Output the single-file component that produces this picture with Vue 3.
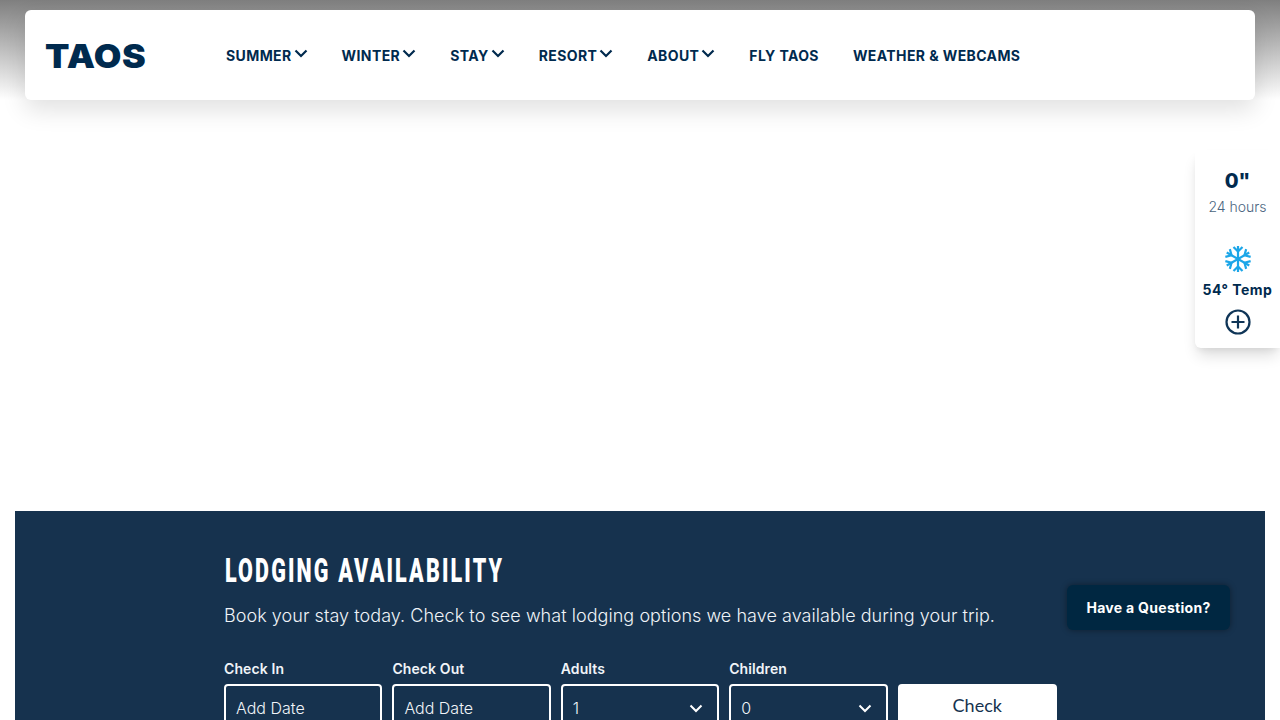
<template>
  <div class="page">
    <header class="site-header">
      <a class="logo">TAOS</a>
      <nav class="main-nav">
        <a v-for="item in navItems" :key="item.label" class="nav-link">
          {{ item.label }}
          <svg v-if="item.menu" class="nav-chevron" viewBox="0 0 14 9">
            <path d="M1.5 1.5 7 7l5.5-5.5" />
          </svg>
        </a>
      </nav>
    </header>

    <div class="hero"></div>

    <section class="lodging">
      <h2 class="lodging-title">Lodging Availability</h2>
      <p class="lodging-text">Book your stay today. Check to see what lodging options we have available during your trip.</p>
      <form class="lodging-form">
        <div v-for="field in fields" :key="field.label" class="field">
          <label class="field-label">{{ field.label }}</label>
          <div class="field-input">
            <span>{{ field.value }}</span>
            <svg v-if="field.select" class="select-chevron" viewBox="0 0 14 9">
              <path d="M1.5 1.5 7 7l5.5-5.5" />
            </svg>
          </div>
        </div>
        <button type="button" class="check-btn">Check</button>
      </form>
    </section>

    <aside class="conditions">
      <div class="snow-depth">0"</div>
      <div class="snow-period">24 hours</div>
      <svg class="snow-icon" viewBox="0 0 28 28">
        <g v-for="angle in [0, 60, 120]" :key="angle" :transform="`rotate(${angle} 14 14)`">
          <path d="M14 1v26" />
          <path d="M9.5 2 14 6.5 18.5 2M9.5 26 14 21.5l4.500 4.500" />
        </g>
      </svg>
      <div class="temp">54° Temp</div>
      <svg class="plus-icon" viewBox="0 0 26 26">
        <circle cx="13" cy="13" r="11.5" />
        <path d="M13 6.500v13M6.500 13h13" />
      </svg>
    </aside>

    <button type="button" class="question-btn">Have a Question?</button>
  </div>
</template>

<script setup>
const navItems = [
  { label: 'SUMMER', menu: true },
  { label: 'WINTER', menu: true },
  { label: 'STAY', menu: true },
  { label: 'RESORT', menu: true },
  { label: 'ABOUT', menu: true },
  { label: 'FLY TAOS', menu: false },
  { label: 'WEATHER & WEBCAMS', menu: false }
]

const fields = [
  { label: 'Check In', value: 'Add Date', select: false },
  { label: 'Check Out', value: 'Add Date', select: false },
  { label: 'Adults', value: '1', select: true },
  { label: 'Children', value: '0', select: true }
]
</script>

<style>
html,
body {
  margin: 0;
  background: #fff;
}
</style>

<style scoped>
.page {
  position: relative;
  width: 1280px;
  height: 720px;
  overflow: hidden;
  padding-top: 10px;
  box-sizing: border-box;
  background: linear-gradient(#7f7f7f, #fff 100px) no-repeat;
  background-size: 100% 100px;
  font-family: Inter, "Liberation Sans", sans-serif;
}

.site-header {
  display: flex;
  align-items: center;
  height: 90px;
  margin: 0 25px;
  padding-left: 20px;
  background: #fff;
  border-radius: 6px;
  box-shadow: 0 10px 25px rgba(0, 0, 0, 0.12);
}

.logo {
  width: 100px;
  margin-top: 2px;
  font-size: 33px;
  font-weight: 900;
  line-height: 1;
  letter-spacing: 0.5px;
  color: #002a4e;
  transform: scaleX(1.08);
  transform-origin: left center;
}

.main-nav {
  display: flex;
  gap: 34px;
  margin-left: 81px;
}

.nav-link {
  display: flex;
  align-items: center;
  gap: 2px;
  font-size: 14px;
  font-weight: 700;
  letter-spacing: 0.4px;
  color: #002a4e;
}

.nav-chevron {
  width: 14px;
  height: 9px;
  margin-top: -3px;
  fill: none;
  stroke: #002a4e;
  stroke-width: 2.2;
}

.hero {
  height: 411px;
}

.lodging {
  height: 209px;
  margin: 0 15px;
  padding: 41px 0 0 209px;
  box-sizing: border-box;
  background: #16324e;
  color: #f0f4f8;
}

.lodging-title {
  margin: 0 0 0 1px;
  font-family: Roboto, sans-serif;
  font-size: 34px;
  font-weight: 900;
  line-height: 36px;
  letter-spacing: 3.4px;
  text-transform: uppercase;
  color: #fff;
  transform: scaleX(0.632);
  transform-origin: left center;
  white-space: nowrap;
}

.lodging-text {
  margin: 14px 0 0;
  font-size: 18px;
  font-weight: 300;
  line-height: 28px;
  letter-spacing: 0.05px;
}

.lodging-form {
  display: grid;
  grid-template-columns: repeat(4, 158.4px) 159.4px;
  gap: 10px;
  align-items: end;
  margin-top: 29px;
}

.field-label {
  display: block;
  margin-bottom: 5px;
  font-size: 14px;
  font-weight: 600;
  line-height: 20px;
  letter-spacing: 0.1px;
}

.field-input {
  display: flex;
  align-items: center;
  justify-content: space-between;
  height: 48px;
  padding: 0 14px 0 10px;
  box-sizing: border-box;
  border: 2px solid #fff;
  border-radius: 4px;
  font-size: 16px;
  font-weight: 300;
}

.select-chevron {
  width: 14px;
  height: 9px;
  fill: none;
  stroke: #fff;
  stroke-width: 2;
}

.check-btn {
  height: 44px;
  margin-bottom: 4px;
  padding-bottom: 3px;
  border: 0;
  border-radius: 4px;
  background: #fff;
  color: #16324e;
  font-family: Lato, sans-serif;
  font-size: 18px;
}

.conditions {
  position: absolute;
  top: 150px;
  right: 0;
  display: flex;
  flex-direction: column;
  align-items: center;
  width: 85px;
  height: 198px;
  padding-top: 20px;
  box-sizing: border-box;
  background: #fff;
  border-radius: 0 0 0 6px;
  box-shadow: 0 10px 15px -3px rgba(0, 0, 0, 0.14), 0 4px 6px -2px rgba(0, 0, 0, 0.06);
  color: #002a4e;
}

.snow-depth {
  font-size: 20px;
  font-weight: 800;
  line-height: 22px;
}

.snow-period {
  margin-top: 5px;
  font-size: 14px;
  font-weight: 300;
  line-height: 20px;
  color: #4a6580;
}

.snow-icon {
  width: 28px;
  height: 28px;
  margin-top: 28px;
  fill: none;
  stroke: #1ca6e8;
  stroke-width: 2.2;
}

.temp {
  margin-top: 7px;
  font-size: 14px;
  font-weight: 700;
  line-height: 20px;
  letter-spacing: 0.5px;
}

.plus-icon {
  width: 26px;
  height: 26px;
  margin-top: 9px;
  fill: none;
  stroke: #0f3557;
  stroke-width: 2.2;
}

.question-btn {
  position: absolute;
  left: 1067px;
  top: 585px;
  width: 163px;
  height: 45px;
  border: 0;
  border-radius: 6px;
  background: #002741;
  box-shadow: 0 0 6px rgba(0, 0, 0, 0.4);
  color: #fff;
  font-family: Inter, sans-serif;
  font-size: 14px;
  font-weight: 700;
  letter-spacing: 0.3px;
}
</style>
